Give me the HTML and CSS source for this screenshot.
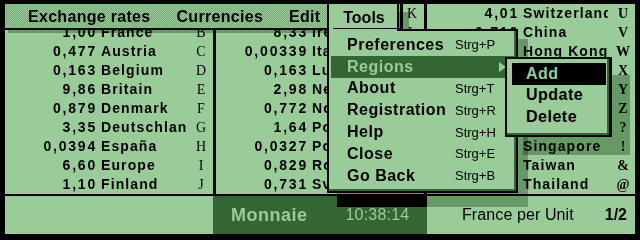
FILE: index.html
```html
<!DOCTYPE html>
<html>
<head>
<meta charset="utf-8">
<link rel="stylesheet" href="styles.css">
</head>
<body>
<div class="screen">
  <div class="table">
    <div class="col">
      <div class="row"><span class="num">0,0512</span><span class="name">Argentina</span><span class="key">A</span></div>
      <div class="row"><span class="num">1,00</span><span class="name">France</span><span class="key">B</span></div>
      <div class="row"><span class="num">0,477</span><span class="name">Austria</span><span class="key">C</span></div>
      <div class="row"><span class="num">0,163</span><span class="name">Belgium</span><span class="key">D</span></div>
      <div class="row"><span class="num">9,86</span><span class="name">Britain</span><span class="key">E</span></div>
      <div class="row"><span class="num">0,879</span><span class="name">Denmark</span><span class="key">F</span></div>
      <div class="row"><span class="num">3,35</span><span class="name">Deutschland</span><span class="key">G</span></div>
      <div class="row"><span class="num">0,0394</span><span class="name">España</span><span class="key">H</span></div>
      <div class="row"><span class="num">6,60</span><span class="name">Europe</span><span class="key">I</span></div>
      <div class="row"><span class="num">1,10</span><span class="name">Finland</span><span class="key">J</span></div>
    </div>
    <div class="col">
      <div class="row"><span class="num">0,0198</span><span class="name">Greece</span><span class="key">K</span></div>
      <div class="row"><span class="num">8,33</span><span class="name">Ireland</span><span class="key">L</span></div>
      <div class="row"><span class="num">0,00339</span><span class="name">Italia</span><span class="key">M</span></div>
      <div class="row"><span class="num">0,163</span><span class="name">Luxembourg</span><span class="key">N</span></div>
      <div class="row"><span class="num">2,98</span><span class="name">Nederland</span><span class="key">O</span></div>
      <div class="row"><span class="num">0,772</span><span class="name">Norge</span><span class="key">P</span></div>
      <div class="row"><span class="num">1,64</span><span class="name">Polska</span><span class="key">Q</span></div>
      <div class="row"><span class="num">0,0327</span><span class="name">Portugal</span><span class="key">R</span></div>
      <div class="row"><span class="num">0,829</span><span class="name">Rossija</span><span class="key">S</span></div>
      <div class="row"><span class="num">0,731</span><span class="name">Sverige</span><span class="key">T</span></div>
    </div>
    <div class="col col-last">
      <div class="row"><span class="num">4,01</span><span class="name">Switzerland</span><span class="key">U</span></div>
      <div class="row"><span class="num">0,710</span><span class="name">China</span><span class="key">V</span></div>
      <div class="row"><span class="num">0,765</span><span class="name">Hong Kong</span><span class="key">W</span></div>
      <div class="row"><span class="num">0,139</span><span class="name">India</span><span class="key">X</span></div>
      <div class="row"><span class="num">0,00071</span><span class="name">Indonesia</span><span class="key">Y</span></div>
      <div class="row"><span class="num">0,0458</span><span class="name">Japan</span><span class="key">Z</span></div>
      <div class="row"><span class="num">0,00449</span><span class="name">Korea</span><span class="key">?</span></div>
      <div class="row"><span class="num">3,52</span><span class="name">Singapore</span><span class="key">!</span></div>
      <div class="row"><span class="num">0,180</span><span class="name">Taiwan</span><span class="key">&amp;</span></div>
      <div class="row"><span class="num">0,146</span><span class="name">Thailand</span><span class="key">@</span></div>
    </div>
  </div>

  <div class="status">
    <div class="seg seg-light"></div>
    <div class="seg seg-dark"><span class="app">Monnaie</span><span class="clock">10:38:14</span></div>
    <div class="seg seg-light seg-info"><span class="unit">France per Unit</span><span class="page">1/2</span></div>
  </div>

  <div class="menubar">
    <span class="mb-item">Exchange rates</span>
    <span class="mb-item">Currencies</span>
    <span class="mb-item">Edit</span>
  </div>
  <div class="shade shade-menubar"></div>
  <div class="shade shade-tab"></div>
  <div class="shade shade-tools"></div>
  <div class="shade-status"></div>

  <div class="tools-body">
    <div class="item"><span class="label">Preferences</span><span class="key-sc">Strg+P</span></div>
    <div class="item item-active"><span class="label">Regions</span><span class="key-sc"></span><span class="arrow"></span></div>
    <div class="item"><span class="label">About</span><span class="key-sc">Strg+T</span></div>
    <div class="item"><span class="label">Registration</span><span class="key-sc">Strg+R</span></div>
    <div class="item"><span class="label">Help</span><span class="key-sc">Strg+H</span></div>
    <div class="item"><span class="label">Close</span><span class="key-sc">Strg+E</span></div>
    <div class="item"><span class="label">Go Back</span><span class="key-sc">Strg+B</span></div>
  </div>
  <div class="tools-tab"><span class="tab-label">Tools</span></div>

  <div class="shade shade-sub"></div>
  <div class="submenu">
    <div class="sub-item sub-active">Add</div>
    <div class="sub-item">Update</div>
    <div class="sub-item">Delete</div>
  </div>
</div>
</body>
</html>
```

FILE: styles.css
```css
html, body {
  margin: 0;
  padding: 0;
  background: #000;
}

.screen {
  position: relative;
  width: 640px;
  height: 240px;
  box-sizing: border-box;
  padding: 4px 5px 6px 5px;
  background: #000;
  display: grid;
  grid-template-rows: 190px 38px;
  row-gap: 2px;
  font-family: "Liberation Sans", Arial, sans-serif;
  color: #000;
  overflow: hidden;
}

/* ---------- table ---------- */
.table {
  display: grid;
  grid-template-columns: 208px 208px 208px;
  column-gap: 3px;
}

.col {
  background: #99cc99;
  display: grid;
  grid-template-rows: repeat(10, 19px);
  overflow: hidden;
}

.row {
  display: grid;
  grid-template-columns: 90px 91px 27px;
  align-items: center;
  line-height: 19px;
  font-size: 14px;
  font-weight: bold;
  white-space: nowrap;
}

.num {
  text-align: right;
  letter-spacing: 1.8px;
  margin-right: -2px;
}

.name {
  overflow: hidden;
  letter-spacing: 1.1px;
  padding-left: 6px;
}

.key {
  font-family: "Liberation Serif", "Times New Roman", serif;
  font-weight: normal;
  font-size: 14px;
  text-align: center;
  padding-left: 3px;
}

.col-last .key {
  font-weight: bold;
}

/* ---------- status bar ---------- */
.status {
  display: grid;
  grid-template-columns: 208px 214px 208px;
}

.seg-light {
  background: #99cc99;
}

.seg-dark {
  background: #336633;
  color: #99cc99;
  display: flex;
  align-items: center;
  padding-left: 18px;
  gap: 38px;
}

.app {
  font-size: 18px;
  font-weight: bold;
  letter-spacing: 0.5px;
}

.clock {
  font-size: 16px;
  letter-spacing: 0.2px;
}

.seg-info {
  display: flex;
  align-items: center;
  justify-content: space-between;
  padding: 0 8px 0 35px;
}

.unit {
  font-size: 16px;
  letter-spacing: 0.1px;
}

.page {
  font-size: 16px;
  font-weight: bold;
}

/* ---------- menubar ---------- */
.menubar {
  position: absolute;
  left: 5px;
  top: 4px;
  width: 398px;
  height: 26px;
  box-sizing: border-box;
  padding: 2px 0 0 23px;
  border-right: 3px solid #000;
  border-bottom: 2px solid #000;
  background-color: #99cc99;
  background-image: repeating-conic-gradient(#99cc99 0 25%, #77a777 0 50%);
  background-size: 2px 2px;
  display: flex;
  align-items: center;
  gap: 26px;
  font-size: 16px;
  font-weight: bold;
  letter-spacing: 0.3px;
}

/* ---------- shadows (darken the content under them) ---------- */
.shade {
  position: absolute;
  background: #aabfaa;
  mix-blend-mode: multiply;
}

.shade-menubar {
  left: 8px;
  top: 30px;
  width: 401px;
  height: 3px;
}

.shade-tab {
  left: 399px;
  top: 12px;
  width: 10px;
  height: 18px;
}

.shade-tools {
  left: 337px;
  top: 39px;
  width: 191px;
  height: 168px;
}

.shade-status {
  position: absolute;
  left: 337px;
  top: 196px;
  width: 90px;
  height: 11px;
  background: #000;
}

.shade-sub {
  left: 523px;
  top: 75px;
  width: 107px;
  height: 80px;
}

/* ---------- Tools menu ---------- */
.tools-tab {
  position: absolute;
  left: 327px;
  top: 2px;
  width: 72px;
  height: 29px;
  box-sizing: border-box;
  border: 2px solid #000;
  border-bottom: 0;
  background: #99cc99;
  display: flex;
  justify-content: center;
  padding-top: 5px;
  font-size: 16px;
  font-weight: bold;
}

.tools-tab::after {
  content: "";
  position: absolute;
  left: 4px;
  right: 0;
  bottom: 2px;
  height: 1px;
  background: #000;
}

.tab-label {
  margin-left: 2px;
}

.tools-body {
  position: absolute;
  left: 327px;
  top: 29px;
  width: 191px;
  height: 164px;
  box-sizing: border-box;
  border: 2px solid #000;
  background: #99cc99;
  box-shadow: inset -2px -2px 0 #336633;
  padding: 3px 2px 0 2px;
  display: grid;
  grid-template-rows: repeat(7, 21.8px);
  align-content: start;
}

.item {
  display: grid;
  grid-template-columns: 108px 1fr auto;
  align-items: center;
  padding-left: 16px;
}

.label {
  font-size: 16px;
  font-weight: bold;
  letter-spacing: 0.5px;
}

.key-sc {
  font-size: 13px;
}

.item-active {
  background: #336633;
  color: #99cc99;
}

.arrow {
  width: 0;
  height: 0;
  border-top: 5px solid transparent;
  border-bottom: 5px solid transparent;
  border-left: 7px solid #99cc99;
  margin-right: 8px;
}

/* ---------- submenu ---------- */
.submenu {
  position: absolute;
  left: 505px;
  top: 57px;
  width: 107px;
  height: 80px;
  box-sizing: border-box;
  border: 2px solid #000;
  border-right-width: 3px;
  background: #99cc99;
  box-shadow: inset -2px -2px 0 #336633;
  padding: 4px 3px 0 5px;
  display: grid;
  grid-template-rows: repeat(3, 21.5px);
  align-content: start;
}

.sub-item {
  display: flex;
  align-items: center;
  padding-left: 14px;
  font-size: 16px;
  font-weight: bold;
  letter-spacing: 0.5px;
}

.sub-active {
  background: #000;
  color: #99cc99;
}
```
